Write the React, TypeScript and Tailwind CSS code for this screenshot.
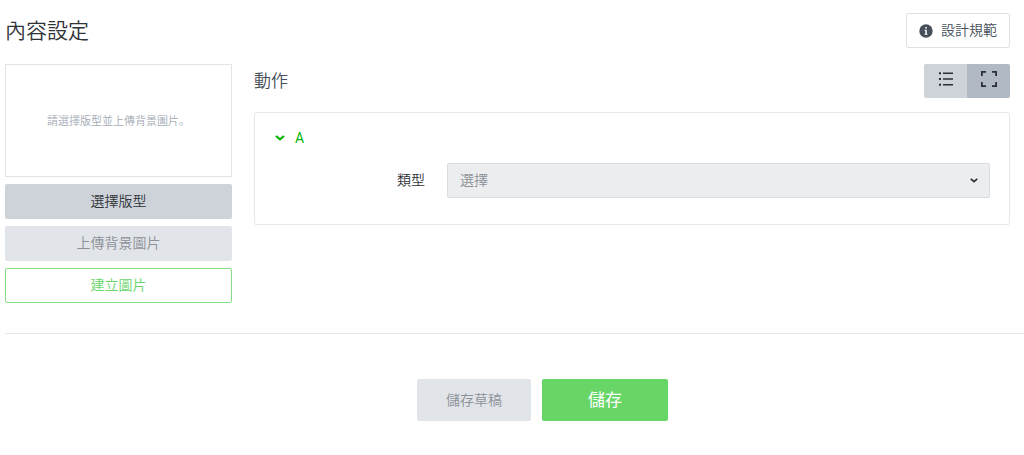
import { useState } from "react";

function InfoIcon() {
  return (
    <svg viewBox="0 0 14 14" className="size-3.5 shrink-0" aria-hidden="true">
      <circle cx="7" cy="7" r="6.7" fill="#464f59" />
      <path d="M6.2 3h1.6v1.6H6.2zM5.6 5.8h2.2v4h.7v.9H5.5v-.9h.8V6.7h-.7z" fill="#fff" />
    </svg>
  );
}

function ListIcon() {
  return (
    <svg viewBox="0 0 14 14" className="size-3.5" fill="#2b3036" aria-hidden="true">
      <path d="M0 .2h2v2H0zM0 6h2v2H0zM0 11.8h2v2H0zM4 .4h10V2H4zM4 6.2h10v1.6H4zM4 12h10v1.6H4z" />
    </svg>
  );
}

function ExpandIcon() {
  return (
    <svg viewBox="0 0 16 16" className="size-4" fill="none" stroke="#2b3036" strokeWidth="1.8" aria-hidden="true">
      <path d="M5 .9H.9V5M11 .9h4.1V5M5 15.1H.9V11M11 15.1h4.1V11" />
    </svg>
  );
}

function Chevron({ className }: { className: string }) {
  return (
    <svg viewBox="0 0 10 6" className={className} fill="none" stroke="currentColor" strokeWidth="2.2" aria-hidden="true">
      <path d="M1 1l4 3.4L9 1" />
    </svg>
  );
}

const sideButton = "h-[35px] w-full rounded-xs pb-[3px] text-sm leading-5";

export default function App() {
  const [open, setOpen] = useState(true);
  const [view, setView] = useState("expanded");

  return (
    <main className="bg-white pt-[13px] pb-8 pl-[5px] font-['Noto_Sans_CJK_JP','Noto_Sans_CJK_TC',sans-serif] font-[350] text-[#303338]">
      <div className="pr-3.5">
        <header className="flex items-start justify-between">
          <h1 className="text-[21px] leading-8">內容設定</h1>
          <button type="button" className="flex h-[35px] items-center gap-2 rounded-xs border border-[#dfe1e4] px-3 text-sm leading-5 text-[#464f59]">
            <InfoIcon />
            <span className="pb-[3px]">設計規範</span>
          </button>
        </header>

        <div className="mt-4 flex items-start gap-[22px]">
          <section className="flex w-[227px] shrink-0 flex-col gap-[7px]">
            <div className="flex h-[113px] items-center justify-center border border-[#e2e4e7] text-[11px] text-[#a3abb5]">
              請選擇版型並上傳背景圖片。
            </div>
            <button type="button" className={`${sideButton} bg-[#ced3da]`}>選擇版型</button>
            <button type="button" disabled className={`${sideButton} bg-[#e1e4e9] text-[#8d9197]`}>上傳背景圖片</button>
            <button type="button" className={`${sideButton} border border-[#83dd83] text-[#68d668]`}>建立圖片</button>
          </section>

          <section className="min-w-0 flex-1">
            <div className="flex h-[34px] items-center justify-between">
              <h2 className="pb-0.5 text-[17px] leading-6 text-[#464f59]">動作</h2>
              <div className="flex h-full overflow-hidden rounded-xs">
                <button type="button" aria-label="清單" aria-pressed={view === "list"} onClick={() => setView("list")} className="flex w-[43px] items-center justify-center bg-[#ced3da] pb-1 aria-pressed:bg-[#b1b9c4]">
                  <ListIcon />
                </button>
                <button type="button" aria-label="展開" aria-pressed={view === "expanded"} onClick={() => setView("expanded")} className="flex w-[43px] items-center justify-center bg-[#ced3da] pb-1 aria-pressed:bg-[#b1b9c4]">
                  <ExpandIcon />
                </button>
              </div>
            </div>

            <div className="mt-3.5 rounded-xs border border-[#e5e7e9] px-[19px] pt-[15px] pb-[26px]">
              <button type="button" aria-expanded={open} onClick={() => setOpen(!open)} className="flex items-center gap-2.5 px-px font-[Roboto,sans-serif] text-sm leading-5 font-normal text-[#08b408]">
                <Chevron className="h-1.5 w-2.5" />
                A
              </button>
              {open && (
                <div className="mt-[15px] flex items-center gap-[22px]">
                  <label htmlFor="type" className="w-[151px] shrink-0 pb-[3px] text-right text-sm leading-5">類型</label>
                  <div className="relative min-w-0 flex-1">
                    <select id="type" defaultValue="" className="block h-[35px] w-full appearance-none rounded-xs border border-[#d9dce0] bg-[#ebedef] px-3 pb-[3px] text-sm leading-5 text-[#8b8f95]">
                      <option value="">選擇</option>
                    </select>
                    <Chevron className="pointer-events-none absolute top-[15px] right-3 h-[5px] w-2 text-[#2b3036]" />
                  </div>
                </div>
              )}
            </div>
          </section>
        </div>
      </div>

      <footer className="mt-[30px] flex justify-center gap-[11px] border-t border-[#e5e7e9] pt-[45px] pl-14">
        <button type="button" disabled className="h-[42px] w-[114px] rounded-xs bg-[#e1e4e9] pb-[3px] text-sm text-[#8d9197]">儲存草稿</button>
        <button type="button" className="h-[42px] w-[126px] rounded-xs bg-[#67d667] pb-[3px] text-[17px] font-normal text-white">儲存</button>
      </footer>
    </main>
  );
}
